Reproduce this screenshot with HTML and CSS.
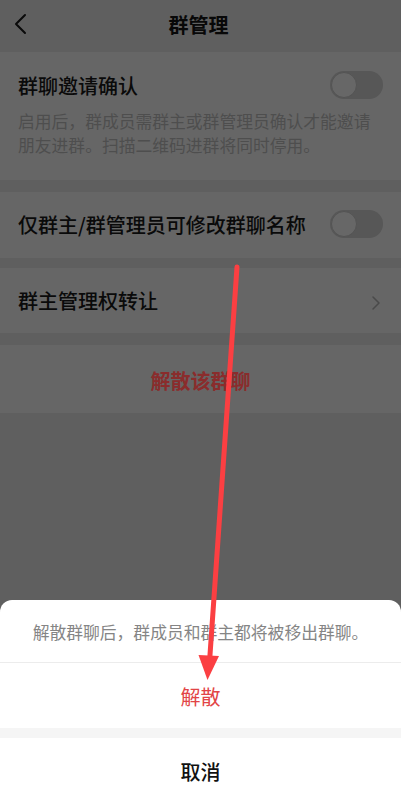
FILE: index.html
```html
<!DOCTYPE html>
<html lang="zh-CN">
<head>
<meta charset="utf-8">
<title>群管理</title>
<link rel="stylesheet" href="styles.css">
</head>
<body>
<div class="page">
  <header class="nav">
    <div class="nav-side">
      <svg class="back" width="20" height="24" viewBox="0 0 20 24"><polyline points="13,3 4,12 13,21" fill="none" stroke="#0a0a0a" stroke-width="2" stroke-linecap="round" stroke-linejoin="round"/></svg>
    </div>
    <div class="nav-title">群管理</div>
    <div class="nav-side"></div>
  </header>

  <section class="card card-invite">
    <div class="row-head">
      <span class="row-title">群聊邀请确认</span>
      <span class="toggle"><span class="knob"></span></span>
    </div>
    <p class="desc">启用后，群成员需群主或群管理员确认才能邀请朋友进群。扫描二维码进群将同时停用。</p>
  </section>

  <section class="card card-row gap-12">
    <span class="row-title">仅群主/群管理员可修改群聊名称</span>
    <span class="toggle"><span class="knob"></span></span>
  </section>

  <section class="card card-row card-transfer gap-10">
    <span class="row-title">群主管理权转让</span>
    <svg class="chev" width="10" height="16" viewBox="0 0 10 16"><polyline points="2,2 8,8 2,14" fill="none" stroke="#4a4a4a" stroke-width="1.5" stroke-linecap="round" stroke-linejoin="round"/></svg>
  </section>

  <section class="card card-dissolve gap-12">
    <span class="dissolve-text">解散该群聊</span>
  </section>
</div>

<div class="sheet">
  <div class="sheet-msg">解散群聊后，群成员和群主都将被移出群聊。</div>
  <div class="sheet-btn danger">解散</div>
  <div class="sheet-gap"></div>
  <div class="sheet-btn cancel">取消</div>
</div>

<svg class="arrow" width="401" height="800" viewBox="0 0 401 800">
  <line x1="237" y1="267" x2="209.5" y2="662" stroke="#fb3f42" stroke-width="5" stroke-linecap="round"/>
  <polygon points="198.5,655 219,656 207.5,680" fill="#fb3f42"/>
</svg>
</body>
</html>
```

FILE: styles.css
```css
* { box-sizing: border-box; }
html, body {
  margin: 0;
  padding: 0;
}
body {
  width: 401px;
  height: 800px;
  overflow: hidden;
  background: #5f5f5f;
  font-family: "Noto Sans CJK SC", "Noto Sans", sans-serif;
  position: relative;
}
.page {
  display: flex;
  flex-direction: column;
}
.nav {
  height: 52px;
  display: flex;
  align-items: center;
  background: #5f5f5f;
}
.nav-side {
  width: 52px;
  display: flex;
  align-items: center;
  padding-left: 12px;
}
.back { display: block; margin-top: -4px; }
.nav-title {
  flex: 1;
  text-align: center;
  font-size: 20px;
  font-weight: 700;
  color: #080808;
  margin-top: -4px;
  padding-right: 4px;
}
.card {
  background: #666666;
}
.card-invite {
  padding: 20px 18px 23px 18px;
}
.row-head {
  display: flex;
  align-items: center;
  justify-content: space-between;
  height: 28px;
}
.row-title {
  font-size: 20px;
  line-height: 28px;
  color: #0a0a0a;
  font-weight: 500;
}
.toggle {
  width: 53px;
  height: 28px;
  border-radius: 14px;
  background: #575757;
  display: flex;
  align-items: center;
  padding-left: 1px;
  margin-top: -3px;
}
.knob {
  width: 26px;
  height: 26px;
  border-radius: 50%;
  background: #676767;
  border: 1px solid #545454;
}
.desc {
  margin: 9px 0 0 0;
  font-size: 16.8px;
  line-height: 24px;
  color: #4e4e4e;
}
.gap-12 { margin-top: 12px; }
.gap-10 { margin-top: 10px; }
.card-row {
  height: 66px;
  padding: 0 18px;
  display: flex;
  align-items: center;
  justify-content: space-between;
}
.card-transfer {
  height: 65px;
  padding-right: 20px;
}
.chev { display: block; margin-top: 4px; }
.card-dissolve {
  height: 68px;
  display: flex;
  align-items: center;
  justify-content: center;
}
.dissolve-text {
  font-size: 20px;
  font-weight: 700;
  color: #8a2c2c;
  margin-top: 2px;
}
.sheet {
  position: absolute;
  left: 0;
  right: 0;
  top: 600px;
  bottom: 0;
  background: #ffffff;
  border-radius: 12px 12px 0 0;
  display: flex;
  flex-direction: column;
}
.sheet-msg {
  height: 63px;
  display: flex;
  align-items: center;
  justify-content: center;
  font-size: 16.8px;
  color: #858585;
  border-bottom: 1px solid #ececec;
  padding-top: 2px;
}
.sheet-btn {
  display: flex;
  align-items: center;
  justify-content: center;
  font-size: 20px;
}
.danger {
  height: 65px;
  color: #e24446;
  padding-top: 2px;
}
.sheet-gap {
  height: 10px;
  background: #f5f5f5;
}
.cancel {
  flex: 1;
  color: #111111;
  font-weight: 500;
  padding-top: 5px;
}
.arrow {
  position: absolute;
  left: 0;
  top: 0;
  pointer-events: none;
}
```
